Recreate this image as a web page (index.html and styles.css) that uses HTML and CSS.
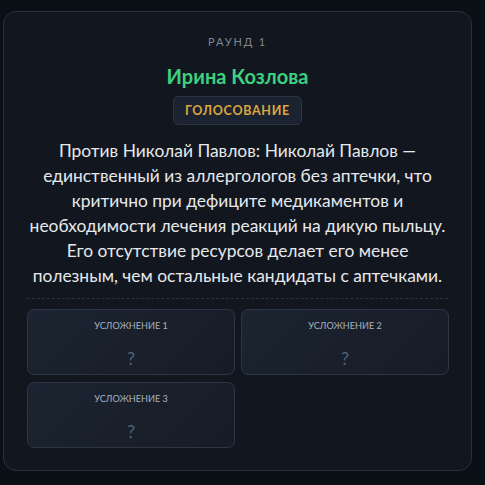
FILE: index.html
```html
<!DOCTYPE html>
<html lang="ru">
<head>
<meta charset="utf-8">
<link rel="stylesheet" href="styles.css">
</head>
<body>
<div class="card">
  <div class="round">РАУНД 1</div>
  <div class="name">Ирина Козлова</div>
  <div class="badge">ГОЛОСОВАНИЕ</div>
  <p class="text">Против Николай Павлов: Николай Павлов — единственный из аллергологов без аптечки, что критично при дефиците медикаментов и необходимости лечения реакций на дикую пыльцу. Его отсутствие ресурсов делает его менее полезным, чем остальные кандидаты с аптечками.</p>
  <div class="divider"></div>
  <div class="grid">
    <div class="cell"><div class="label">УСЛОЖНЕНИЕ 1</div><div class="q">?</div></div>
    <div class="cell"><div class="label">УСЛОЖНЕНИЕ 2</div><div class="q">?</div></div>
    <div class="cell"><div class="label">УСЛОЖНЕНИЕ 3</div><div class="q">?</div></div>
  </div>
</div>
</body>
</html>
```
FILE: styles.css
```css
html, body { margin: 0; padding: 0; }
body {
  background: #0b0f16;
  font-family: Lato, "Noto Sans", sans-serif;
  width: 485px;
  height: 485px;
  overflow: hidden;
}
.card {
  box-sizing: border-box;
  margin: 11px 13px 0 3px;
  height: 460px;
  background: #12171f;
  border: 1px solid #283041;
  border-radius: 13px;
  display: flex;
  flex-direction: column;
  align-items: center;
  padding: 22px 20px 0 20px;
}
.round {
  color: #7d8696;
  font-size: 11px;
  letter-spacing: 1.8px;
  line-height: 16px;
  height: 16px;
}
.name {
  margin-top: 13px;
  color: #3dd07f;
  font-weight: 700;
  font-size: 20px;
  line-height: 26px;
}
.badge {
  margin-top: 7px;
  background: #1b2230;
  border: 1px solid #2a3343;
  border-radius: 5px;
  color: #dca63e;
  font-weight: 700;
  font-size: 12.5px;
  letter-spacing: 0.7px;
  padding: 6px 11px 5px;
  line-height: 16px;
}
.text {
  margin: 13px 0 0;
  color: #e6e8ec;
  font-size: 17.4px;
  line-height: 25px;
  text-align: center;
}
.divider {
  align-self: stretch;
  margin: 10px 3px 0 3px;
  border-top: 1px dashed #2b3240;
}
.grid {
  align-self: stretch;
  margin: 10px 2px 0 3px;
  display: grid;
  grid-template-columns: 1fr 1fr;
  gap: 7px 6px;
}
.cell {
  height: 66px;
  box-sizing: border-box;
  border: 1px solid #2c3545;
  border-radius: 7px;
  background: linear-gradient(135deg, #1c2431, #161c27);
  display: flex;
  flex-direction: column;
  align-items: center;
  padding-top: 10px;
}
.label {
  color: #a8b0bc;
  font-size: 9.1px;
  line-height: 12px;
}
.q {
  margin-top: 16px;
  color: #556073;
  font-size: 18px;
  line-height: 20px;
}
```
